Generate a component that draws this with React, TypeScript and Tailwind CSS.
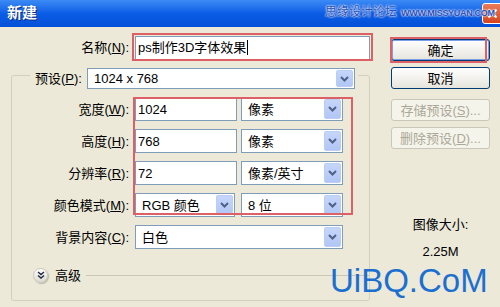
import type { ReactNode } from 'react';

const FONT = "font-['Liberation_Sans','Noto_Sans_CJK_SC',sans-serif]";

const Key = ({ k }: { k: string }) => <span className="underline underline-offset-1">{k}</span>;

const Arrow = () => (
  <div className="w-[17px] h-full rounded-[2px] bg-gradient-to-b from-[#c6d6fb] to-[#b0c6f4] border border-[#b9cdf6] flex items-center justify-center">
    <svg width="9" height="6" viewBox="0 0 9 6">
      <path d="M1 1 L4.5 4.5 L8 1" stroke="#4d6185" strokeWidth="2" fill="none" />
    </svg>
  </div>
);

const Select = ({ value, w, h = 'h-[24px]' }: { value: string; w: string; h?: string }) => (
  <div className={`${w} ${h} bg-white border border-[#7f9db9] flex items-center p-[1px] pl-[6px]`}>
    <span className="flex-1 text-[13px] text-black leading-none">{value}</span>
    <Arrow />
  </div>
);

const Input = ({ value, w, caret }: { value: string; w: string; caret?: boolean }) => (
  <div className={`${w} h-[24px] bg-white border border-[#7f9db9] flex items-center pl-[2px] text-[13px] leading-none text-black`}>
    {value}
    {caret && <span className="w-px h-[15px] bg-black ml-[1px]" />}
  </div>
);

const Row = ({ label, children }: { label: ReactNode; children: ReactNode }) => (
  <div className="flex items-center h-[24px]">
    <div className="w-[117px] text-right text-[13px] text-black leading-none">{label}</div>
    <div className="ml-[6px] flex gap-[4px]">{children}</div>
  </div>
);

const Button = ({ children, disabled, focus }: { children: ReactNode; disabled?: boolean; focus?: boolean }) => (
  <div
    className={`w-[99px] h-[22px] rounded-[3px] flex items-center justify-center text-[13px] leading-none ${
      disabled
        ? 'border border-[#c9c7ba] bg-[#f5f4ea] text-[#aca899]'
        : `border border-[#003c74] bg-gradient-to-b from-white to-[#e6e4dc] text-black ${focus ? 'shadow-[inset_0_0_0_1px_#7aa0e8]' : ''}`
    }`}
  >
    {children}
  </div>
);

export default function App() {
  return (
    <div className={`relative w-[500px] h-[307px] overflow-hidden bg-[#ece9d8] ${FONT}`}>
      {/* title bar */}
      <div className="h-[27px] flex items-center justify-between bg-gradient-to-b from-[#3b8af4] via-[#0b5de6] to-[#0550d6] pl-[7px]">
        <span className="text-white font-bold text-[15px] [text-shadow:1px_1px_0_#0a2a80]">新建</span>
        <div className="w-[21px] h-[21px] mr-[-3px] rounded-[3px] border border-white bg-gradient-to-b from-[#e87a58] to-[#d5431c] flex items-center justify-center">
          <svg width="11" height="11" viewBox="0 0 11 11">
            <path d="M1.5 1.5 L9.5 9.5 M9.5 1.5 L1.5 9.5" stroke="white" strokeWidth="2.2" />
          </svg>
        </div>
      </div>
      <div className="absolute left-[325px] top-[6px] flex items-end gap-[4px] [text-shadow:0_0_2px_#fff,0_0_2px_#fff]">
        <span className="text-[12px] leading-none text-[#2a4fb8]">思缘设计论坛</span>
        <span className="text-[9px] leading-none font-bold text-[#2a4fb8] tracking-[-0.3px]">WWW.MISSYUAN.COM</span>
      </div>

      <div className="flex">
        {/* left column */}
        <div className="w-[372px]">
          <div className="flex items-center h-[23px] mt-[9px]">
            <div className="w-[129px] text-right text-[13px] leading-none text-black">
              名称(<Key k="N" />):
            </div>
            <div className="ml-[6px]">
              <Input value="ps制作3D字体效果" w="w-[235px]" caret />
            </div>
          </div>

          <div className="ml-[11px] mt-[16px] w-[359px] h-[226px] border border-[#d0d0bf] rounded-[3px]">
            <div className="mt-[-8px] ml-[18px] w-[328px] h-[21px] flex items-center bg-[#ece9d8] pl-[5px] pr-[3px]">
              <span className="text-[13px] leading-none text-black">
                预设(<Key k="P" />):
              </span>
              <div className="ml-auto">
                <Select value="1024 x 768" w="w-[268px]" h="h-[21px]" />
              </div>
            </div>

            <div className="mt-[8px] flex flex-col gap-[8px]">
              <Row label={<>宽度(<Key k="W" />):</>}>
                <Input value="1024" w="w-[102px]" />
                <Select value="像素" w="w-[102px]" />
              </Row>
              <Row label={<>高度(<Key k="H" />):</>}>
                <Input value="768" w="w-[102px]" />
                <Select value="像素" w="w-[102px]" />
              </Row>
              <Row label={<>分辨率(<Key k="R" />):</>}>
                <Input value="72" w="w-[102px]" />
                <Select value="像素/英寸" w="w-[102px]" />
              </Row>
              <Row label={<>颜色模式(<Key k="M" />):</>}>
                <Select value="RGB 颜色" w="w-[100px]" />
                <div className="ml-[2px]">
                  <Select value="8 位" w="w-[102px]" />
                </div>
              </Row>
              <Row label={<>背景内容(<Key k="C" />):</>}>
                <Select value="白色" w="w-[208px]" />
              </Row>
            </div>

            <div className="mt-[16px] h-[20px] flex items-center pl-[21px]">
              <div className="w-[15px] h-[15px] rounded-full border border-[#c9c7ba] bg-gradient-to-b from-white to-[#dcdad0] flex items-center justify-center shadow-[1px_1px_1px_#b8b6aa]">
                <svg width="8" height="8" viewBox="0 0 8 8">
                  <path d="M1 1 L4 3.5 L7 1 M1 4.5 L4 7 L7 4.5" stroke="#1f2a44" strokeWidth="1.4" fill="none" />
                </svg>
              </div>
              <span className="ml-[7px] text-[13px] leading-none text-black">高级</span>
              <div className="ml-[5px] flex-1 h-px bg-[#c9c7b4]" />
            </div>
          </div>
        </div>

        {/* right column */}
        <div className="flex-1 pl-[19px] pt-[12px] flex flex-col">
          <Button focus>确定</Button>
          <div className="mt-[6px]">
            <Button>取消</Button>
          </div>
          <div className="mt-[10px]">
            <Button disabled>
              存储预设(<Key k="S" />)...
            </Button>
          </div>
          <div className="mt-[6px]">
            <Button disabled>
              删除预设(<Key k="D" />)...
            </Button>
          </div>
          <div className="mt-[68px] w-[99px] text-center text-[13px] leading-[16px] text-black">图像大小:</div>
          <div className="mt-[11px] w-[99px] text-center text-[13px] leading-[16px] text-black">2.25M</div>
        </div>
      </div>

      {/* red annotation boxes */}
      <div className="absolute left-[132px] top-[33px] w-[241px] h-[28px] border-2 border-[#dc6066]" />
      <div className="absolute left-[390px] top-[37px] w-[97px] h-[26px] border-2 border-[#dc6066]" />
      <div className="absolute left-[133px] top-[97px] w-[220px] h-[118px] border-2 border-[#dc6066]" />

      {/* watermark */}
      <div className="absolute left-[330px] top-[264px] text-[33px] leading-none text-[#1a6fd0] font-['Liberation_Sans',sans-serif]">
        UiBQ.CoM
      </div>
    </div>
  );
}
